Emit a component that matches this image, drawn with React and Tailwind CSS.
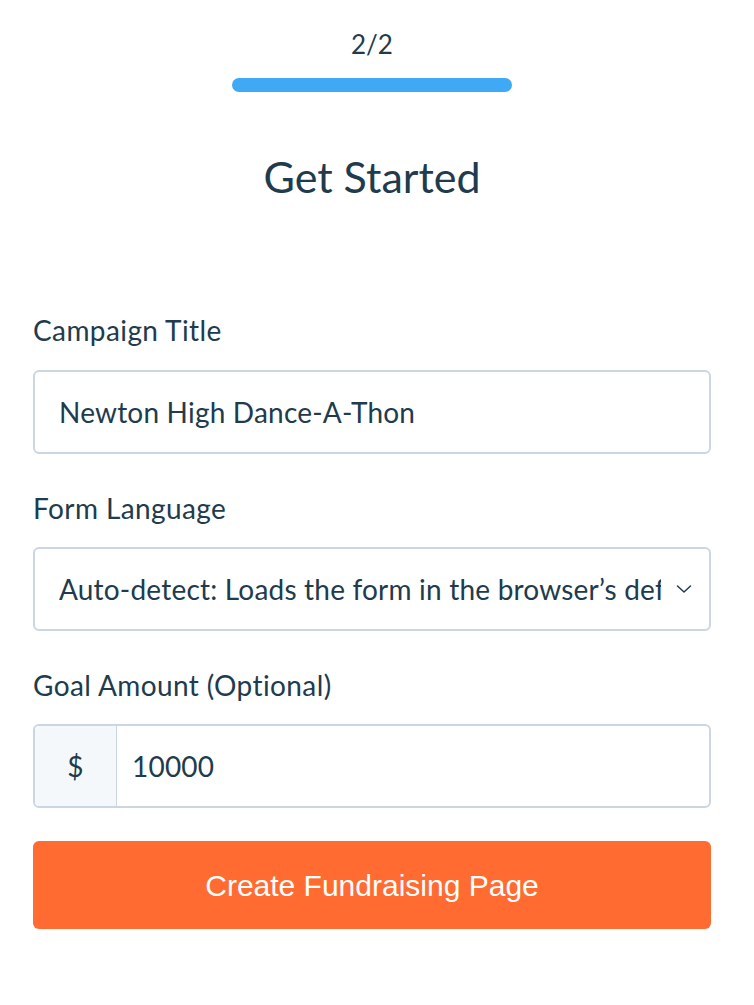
import React from "react";

export default function App() {
  const font = { fontFamily: "Lato, 'Noto Sans', sans-serif" };
  return (
    <div className="w-[754px] h-[1005px] bg-white text-[#213b4d]" style={font}>
      <div className="w-[744px] flex flex-col items-center pt-[26px]">
        <div className="text-[26px] leading-[36px]">2/2</div>
        <div className="mt-[16px] w-[280px] h-[14px] rounded-full bg-[#3fa9f5]" />
        <h1 className="mt-[60px] text-[43px] leading-[50px] font-normal">Get Started</h1>
      </div>
      <div className="w-[744px] px-[33px] mt-[110px] flex flex-col tracking-[0.4px]">
        <label className="text-[28px] leading-[36px]">Campaign Title</label>
        <div className="mt-[22px] h-[84px] border-2 border-[#cbd6e2] rounded-[6px] flex items-center px-[24px] text-[28px] tracking-[0.2px]">
          Newton High Dance-A-Thon
        </div>
        <label className="mt-[36px] text-[28px] leading-[36px]">Form Language</label>
        <div className="mt-[21px] h-[84px] border-2 border-[#cbd6e2] rounded-[6px] flex items-center pl-[24px] pr-[16px] text-[28px] tracking-[0.2px]">
          <span className="flex-1 min-w-0 overflow-hidden whitespace-nowrap">Auto-detect: Loads the form in the browser’s default language</span>
          <svg width="18" height="18" viewBox="0 0 18 18" fill="none" className="ml-[14px] shrink-0">
            <path d="M2.5 6 L9 12 L15.5 6" stroke="#213b4d" strokeWidth="1.5" strokeLinecap="round" strokeLinejoin="round" />
          </svg>
        </div>
        <label className="mt-[36px] text-[28px] leading-[36px]">Goal Amount (Optional)</label>
        <div className="mt-[21px] h-[84px] border-2 border-[#cbd6e2] rounded-[6px] flex text-[28px] overflow-hidden tracking-[0.2px]">
          <div className="w-[82px] bg-[#f5f8fa] border-r border-[#cbd6e2] flex items-center justify-center">$</div>
          <div className="flex-1 flex items-center px-[15px]">10000</div>
        </div>
        <button
          className="mt-[33px] h-[88px] rounded-[6px] bg-[#ff6b30] text-white text-[30px] tracking-normal flex items-center justify-center"
          style={{ fontFamily: "'Liberation Sans', Arial, sans-serif" }}
        >
          Create Fundraising Page
        </button>
      </div>
    </div>
  );
}
